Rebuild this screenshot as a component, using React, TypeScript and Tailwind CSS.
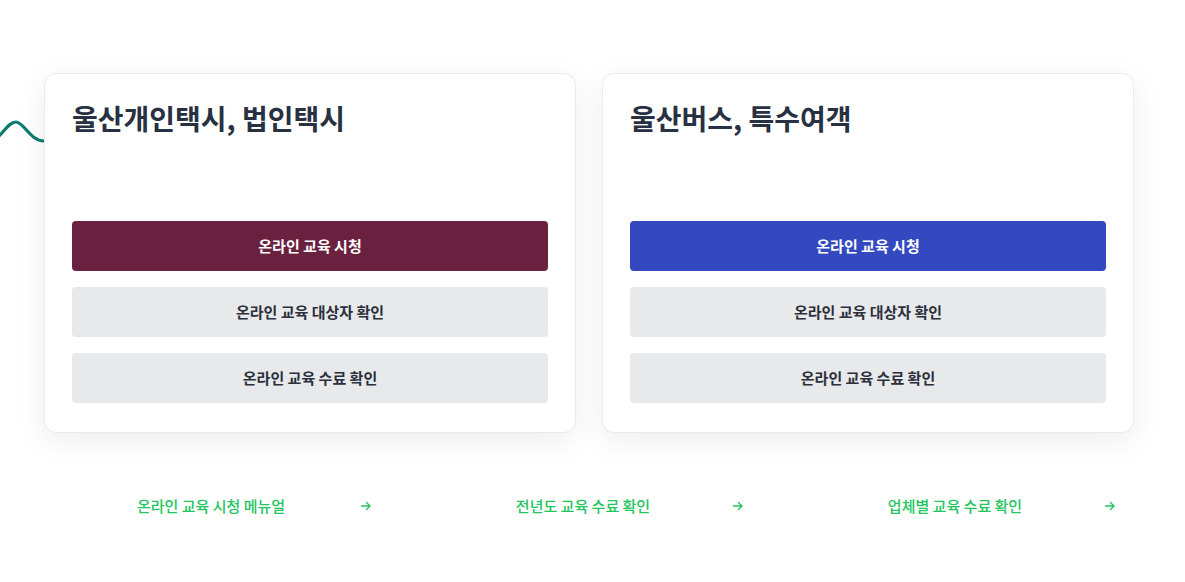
import React from "react";

const font = { fontFamily: '"Noto Sans CJK KR", "Noto Sans", sans-serif' };

function Arrow() {
  return (
    <svg width="12" height="12" viewBox="0 0 12 12" fill="none" className="shrink-0">
      <path d="M1.5 6H10M6.5 2.5L10 6L6.5 9.5" stroke="#22c55e" strokeWidth="1.4" strokeLinecap="round" strokeLinejoin="round" />
    </svg>
  );
}

function Card({ title, color }: { title: string; color: string }) {
  return (
    <div className="w-[532px] h-[360px] bg-white rounded-[12px] border border-[#ebebee] shadow-[0_8px_30px_rgba(0,0,0,0.07)] px-[27px] pt-[26px] pb-[28px] flex flex-col relative z-10">
      <h2 className="text-[28px] leading-[36px] font-bold text-[#283142] h-[36px]">{title}</h2>
      <div className="mt-[85px] flex flex-col gap-4">
        <button className={`h-[50px] rounded-[4px] text-white text-[15px] font-bold ${color}`}>온라인 교육 시청</button>
        <button className="h-[50px] rounded-[4px] bg-[#e8e9eb] text-[#2b303b] text-[15px] font-bold">온라인 교육 대상자 확인</button>
        <button className="h-[50px] rounded-[4px] bg-[#e8e9eb] text-[#2b303b] text-[15px] font-bold">온라인 교육 수료 확인</button>
      </div>
    </div>
  );
}

function LinkItem({ label }: { label: string }) {
  return (
    <div className="w-[372px] flex items-center pl-[70px]">
      <span className="flex-1 text-center text-[15px] font-medium text-[#22c55e]">{label}</span>
      <span className="ml-[8px]"><Arrow /></span>
    </div>
  );
}

export default function App() {
  return (
    <div className="w-[1185px] h-[582px] bg-white overflow-hidden relative" style={font}>
      <svg className="absolute left-0 top-[110px] z-0" width="80" height="40" viewBox="0 0 80 40" fill="none">
        <path d="M-4 29 C4 22 9 12 16 12 C24 12 30 31 44 31 C56 31 66 25 80 20" stroke="#0b7d70" strokeWidth="3.2" fill="none" />
      </svg>
      <div className="pt-[73px] pl-[44px] flex gap-[26px]">
        <Card title="울산개인택시, 법인택시" color="bg-[#69213f]" />
        <Card title="울산버스, 특수여객" color="bg-[#3449bf]" />
      </div>
      <div className="mt-[62px] flex">
        <LinkItem label="온라인 교육 시청 메뉴얼" />
        <LinkItem label="전년도 교육 수료 확인" />
        <LinkItem label="업체별 교육 수료 확인" />
      </div>
    </div>
  );
}
